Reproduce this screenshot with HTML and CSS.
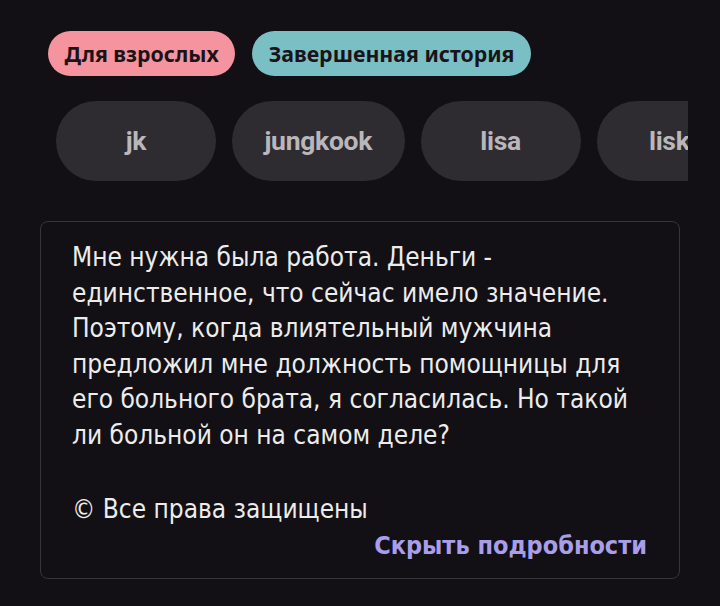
FILE: index.html
```html
<!DOCTYPE html>
<html lang="ru">
<head>
  <meta charset="UTF-8" />
  <meta name="viewport" content="width=device-width, initial-scale=1.0" />
  <title>История</title>
  <link rel="stylesheet" href="styles.css">
</head>
<body>
  <div class="badges">
    <span class="badge badge-adult">Для взрослых</span>
    <span class="badge badge-done">Завершенная история</span>
  </div>
  <div class="chips">
    <div class="chip">jk</div>
    <div class="chip">jungkook</div>
    <div class="chip">lisa</div>
    <div class="chip">lisko</div>
  </div>
  <div class="details">
    <p class="summary">Мне нужна была работа. Деньги - единственное, что сейчас имело значение. Поэтому, когда влиятельный мужчина предложил мне должность помощницы для его больного брата, я согласилась. Но такой ли больной он на самом деле?</p>
    <p class="copyright">© Все права защищены</p>
    <div class="toggle-row">
      <a class="toggle" href="#">Скрыть подробности</a>
    </div>
  </div>
</body>
</html>
```

FILE: styles.css
```css
body {
  margin: 0;
  background-color: #121014;
  color: #ececec;
  font-family: "Liberation Sans Narrow", "DejaVu Sans Condensed", "Noto Sans", sans-serif;
}
.badges {
  display: flex;
  gap: 17px;
  padding: 31px 0 0 48px;
}
.badge {
  font-family: "Noto Sans", sans-serif;
  font-weight: 700;
  font-size: 21.3px;
  color: #1a1418;
  height: 45px;
  line-height: 45px;
  padding: 0 16.5px;
  border-radius: 23px;
}
.badge-adult {
  background-color: #f5939f;
}
.badge-done {
  background-color: #79bfc4;
}
.chips {
  display: flex;
  gap: 16px;
  margin: 25px 0 0 56px;
  width: 632px;
  overflow: hidden;
}
.chip {
  flex: none;
  min-width: 160px;
  box-sizing: border-box;
  height: 80px;
  line-height: 80px;
  padding: 0 32.5px;
  border-radius: 40px;
  background-color: #2e2c30;
  color: #b9b7bb;
  font-family: Roboto, sans-serif;
  font-weight: 700;
  font-size: 26.5px;
  letter-spacing: -0.3px;
  text-align: center;
}
.details {
  margin: 40px 0 0 40px;
  width: 640px;
  box-sizing: border-box;
  border: 1px solid #38363a;
  border-radius: 8px;
  padding: 18px 32px 11px 31px;
}
.summary,
.copyright {
  margin: 0;
  font-size: 26px;
  line-height: 35.6px;
}
.copyright {
  margin-top: 38.6px;
}
.toggle-row {
  text-align: right;
  margin-top: 0;
  line-height: 36px;
}
.toggle {
  color: #a99ee9;
  font-weight: 700;
  font-size: 25px;
  text-decoration: none;
}
```
